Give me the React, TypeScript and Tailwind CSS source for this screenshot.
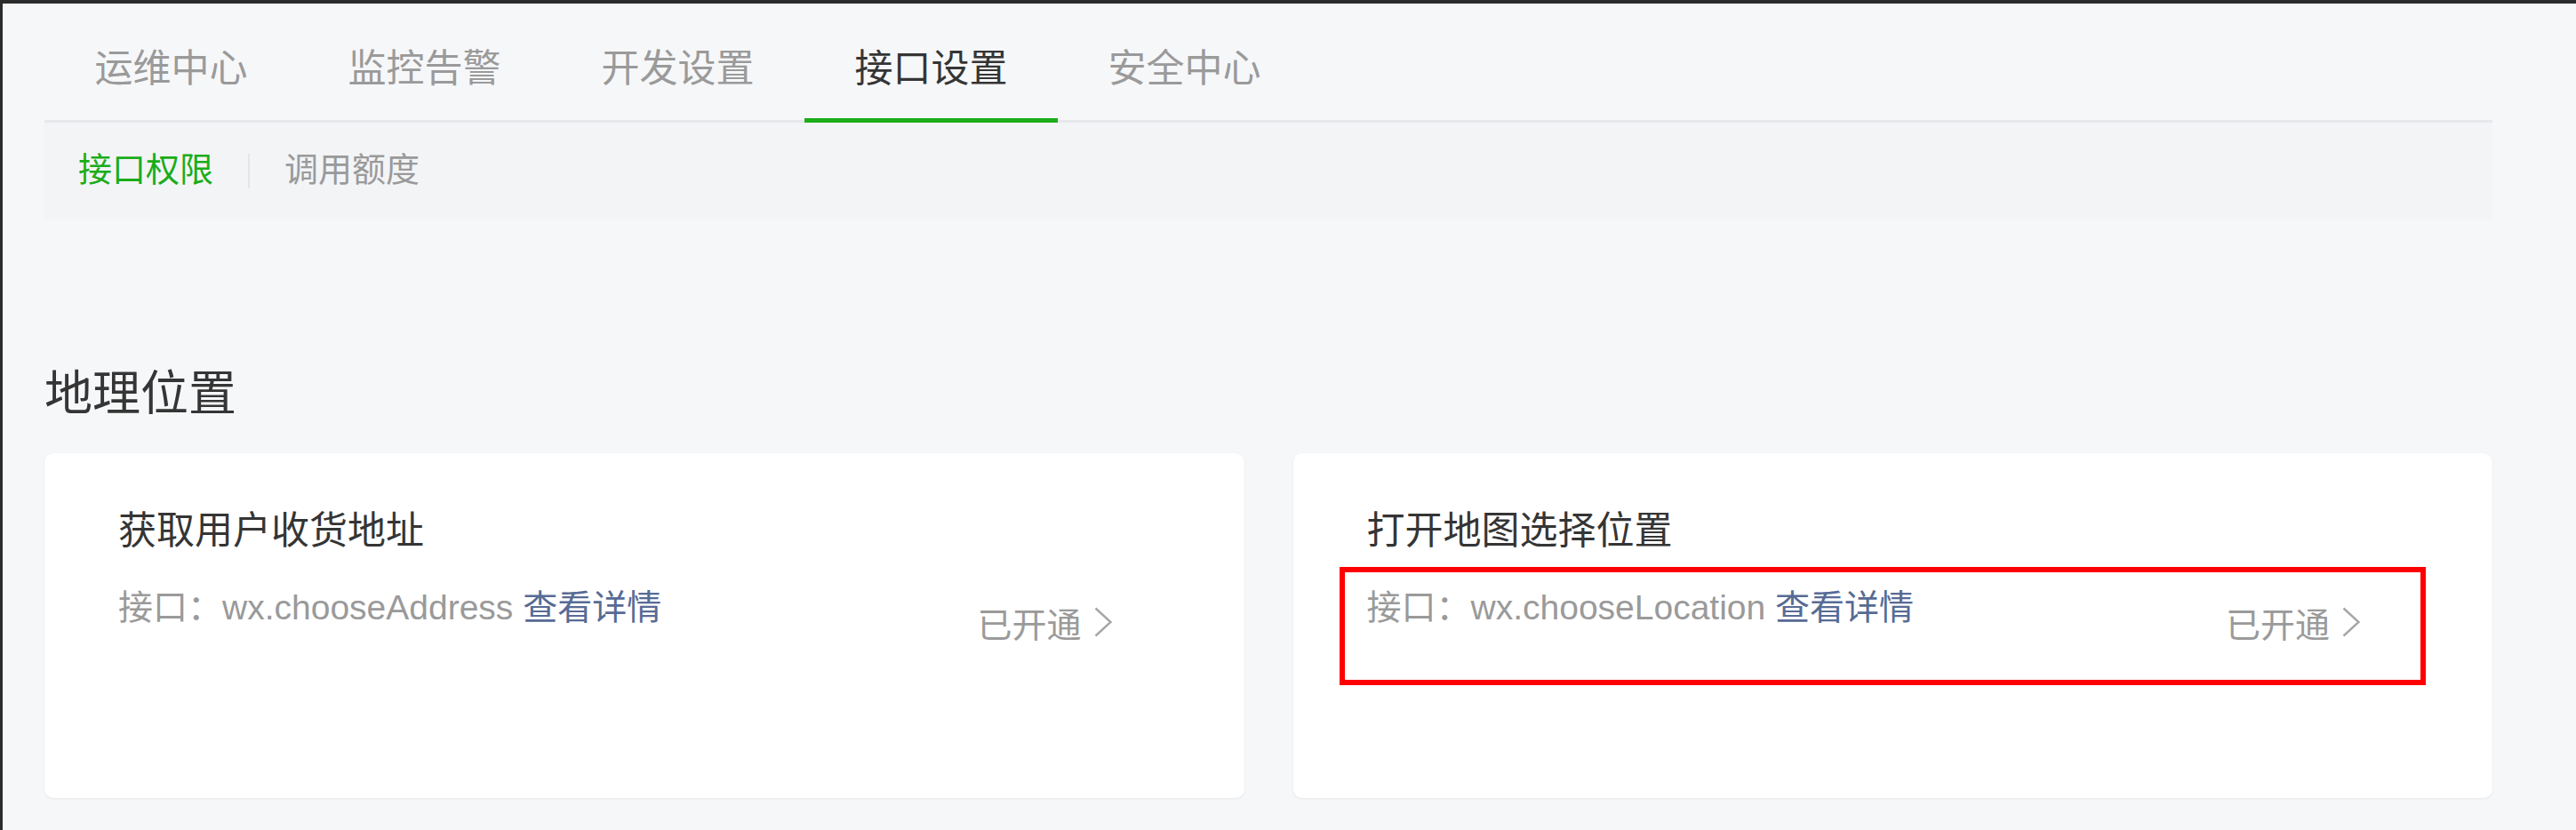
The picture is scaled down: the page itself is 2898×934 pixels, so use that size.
import React from "react";

const tabs = ["运维中心", "监控告警", "开发设置", "接口设置", "安全中心"];

function Chevron() {
  return (
    <svg width="20" height="34" viewBox="0 0 20 34" className="mt-[-1px] ml-[14px] shrink-0">
      <polyline points="1.5,1.5 18.5,17 1.5,32.5" fill="none" stroke="#a6a6a6" strokeWidth="2.4" strokeLinejoin="miter" />
    </svg>
  );
}

function Card({ title, api, marked }: { title: string; api: string; marked?: boolean }) {
  return (
    <div className="relative h-[388px] rounded-[10px] bg-white shadow-[0_1px_3px_rgba(0,0,0,0.07)] pl-[83px] pr-[149px] pt-[66px]">
      <div className="text-[43px] leading-[43px] text-[#353535]">{title}</div>
      <div className="mt-[45px] flex items-start justify-between text-[39px] leading-[39px]">
        <div className="text-[#9a9a9a] whitespace-nowrap">
          接口：{api} <span className="text-[#576b95]">查看详情</span>
        </div>
        <div className="mt-[20px] flex items-start text-[#9a9a9a] whitespace-nowrap">
          <span>已开通</span>
          <Chevron />
        </div>
      </div>
      {marked && (
        <div className="absolute left-[52px] top-[128px] w-[1222px] h-[133px] border-[6px] border-[#ff0000]" />
      )}
    </div>
  );
}

export default function App() {
  return (
    <div className="w-[2898px] h-[934px] overflow-hidden bg-[#2b2b2b] pt-[4px] pl-[3px] font-['Liberation_Sans','Noto_Sans_CJK_SC',sans-serif]">
      <div className="h-[930px] bg-[#f6f7f9] pl-[47px] pr-[94px] overflow-hidden">
        <div className="flex h-[134px] border-b-[3px] border-[#e7e8eb]">
          {tabs.map((t, i) =>
            i === 3 ? (
              <div
                key={t}
                className="w-[285px] pt-[52px] text-center text-[43px] leading-[43px] text-[#353535] border-b-[5px] border-[#1aad19] -mb-[3px]"
              >
                {t}
              </div>
            ) : (
              <div key={t} className="w-[285px] pt-[52px] text-center text-[43px] leading-[43px] text-[#9a9a9a]">
                {t}
              </div>
            )
          )}
        </div>
        <div className="flex items-start h-[109px] bg-[#f3f4f6] pl-[38px] pt-[34px] text-[38px] leading-[38px]">
          <span className="text-[#1aad19]">接口权限</span>
          <span className="mt-[1px] mx-[39px] w-[2px] h-[39px] bg-[#e4e5e7]" />
          <span className="text-[#9a9a9a]">调用额度</span>
        </div>
        <div className="mt-[169px] text-[54px] leading-[54px] text-[#353535]">地理位置</div>
        <div className="mt-[40px] grid grid-cols-2 gap-[55px]">
          <Card title="获取用户收货地址" api="wx.chooseAddress" />
          <Card title="打开地图选择位置" api="wx.chooseLocation" marked />
        </div>
      </div>
    </div>
  );
}
